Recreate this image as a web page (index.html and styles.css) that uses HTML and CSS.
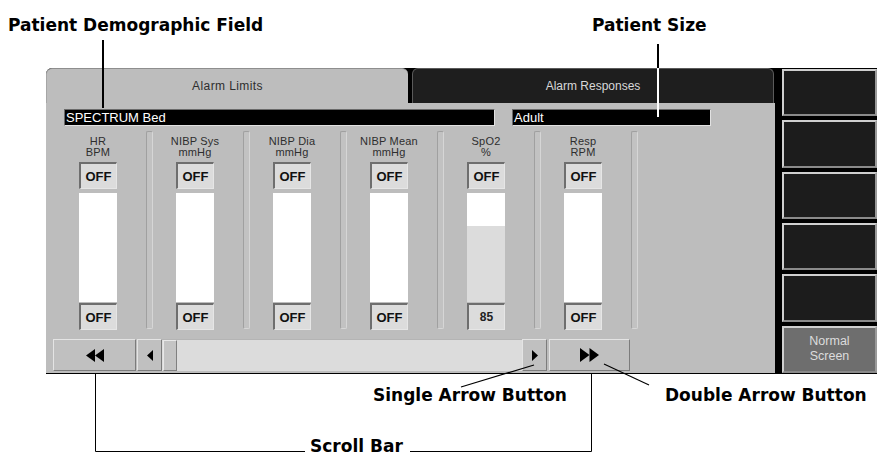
FILE: index.html
```html
<!DOCTYPE html>
<html>
<head>
<meta charset="utf-8">
<link rel="stylesheet" href="styles.css">
</head>
<body>
<div class="page">
  <div class="screen">
    <div class="main">
      <div class="tabs">
        <div class="tab tab-active">Alarm Limits</div>
        <div class="tab tab-dark">Alarm Responses</div>
      </div>
      <div class="panel">
        <div class="fields">
          <div class="field field-name">SPECTRUM Bed</div>
          <div class="field field-size">Adult</div>
        </div>
        <div class="columns">
          <div class="col">
            <div class="label">HR<br>BPM</div>
            <div class="box">OFF</div>
            <div class="bar"></div>
            <div class="box box-low">OFF</div>
          </div>
          <div class="sep"></div>
          <div class="col">
            <div class="label">NIBP Sys<br>mmHg</div>
            <div class="box">OFF</div>
            <div class="bar"></div>
            <div class="box box-low">OFF</div>
          </div>
          <div class="sep"></div>
          <div class="col">
            <div class="label">NIBP Dia<br>mmHg</div>
            <div class="box">OFF</div>
            <div class="bar"></div>
            <div class="box box-low">OFF</div>
          </div>
          <div class="sep"></div>
          <div class="col">
            <div class="label">NIBP Mean<br>mmHg</div>
            <div class="box">OFF</div>
            <div class="bar"></div>
            <div class="box box-low">OFF</div>
          </div>
          <div class="sep"></div>
          <div class="col">
            <div class="label">SpO2<br>%</div>
            <div class="box">OFF</div>
            <div class="bar bar-spo2"><div class="bar-fill" style="height:76px"></div></div>
            <div class="box box-low box-value">85</div>
          </div>
          <div class="sep"></div>
          <div class="col">
            <div class="label">Resp<br>RPM</div>
            <div class="box">OFF</div>
            <div class="bar"></div>
            <div class="box box-low">OFF</div>
          </div>
          <div class="sep"></div>
        </div>
        <div class="scroll">
          <div class="sbtn sbtn-double">
            <svg width="18" height="13" viewBox="0 0 18 13"><polygon points="9,0 0,6.5 9,13"/><polygon points="18,0 9,6.5 18,13"/></svg>
          </div>
          <div class="sbtn sbtn-single sbtn-left">
            <svg width="6" height="11" viewBox="0 0 6 11"><polygon points="6,0 0,5.5 6,11"/></svg>
          </div>
          <div class="track"><div class="thumb"></div></div>
          <div class="sbtn sbtn-single">
            <svg width="6" height="11" viewBox="0 0 6 11"><polygon points="0,0 6,5.5 0,11"/></svg>
          </div>
          <div class="sbtn sbtn-double sbtn-right">
            <svg width="19" height="14" viewBox="0 0 19 14"><polygon points="0,0 9.5,7 0,14"/><polygon points="9.5,0 19,7 9.5,14"/></svg>
          </div>
        </div>
      </div>
    </div>
    <div class="side">
      <div class="key"></div>
      <div class="key"></div>
      <div class="key"></div>
      <div class="key"></div>
      <div class="key"></div>
      <div class="key key-normal">Normal<br>Screen</div>
    </div>
  </div>

  <svg class="leaders" width="877" height="456" viewBox="0 0 877 456">
    <line x1="103" y1="40" x2="103" y2="108" stroke="#000" stroke-width="2"/>
    <line x1="658" y1="44" x2="658" y2="68" stroke="#000" stroke-width="2"/>
    <line x1="658" y1="68" x2="658" y2="117" stroke="#fff" stroke-width="2"/>
    <line x1="534" y1="365" x2="461" y2="387" stroke="#000" stroke-width="1.2"/>
    <line x1="604" y1="364" x2="649" y2="385" stroke="#000" stroke-width="1.2"/>
    <polyline points="95.5,374 95.5,451.5 305,451.5" fill="none" stroke="#000" stroke-width="1"/>
    <polyline points="410,451.5 591.5,451.5 591.5,374" fill="none" stroke="#000" stroke-width="1"/>
  </svg>

  <div class="note note-demo">Patient Demographic Field</div>
  <div class="note note-size">Patient Size</div>
  <div class="note note-single">Single Arrow Button</div>
  <div class="note note-double">Double Arrow Button</div>
  <div class="note note-scroll">Scroll Bar</div>
</div>
</body>
</html>
```

FILE: styles.css
```css
html, body {
  margin: 0;
  padding: 0;
  background: #ffffff;
}

.page {
  position: relative;
  width: 877px;
  height: 456px;
  overflow: hidden;
  padding-top: 68px;
  box-sizing: border-box;
  font-family: "Liberation Sans", Arial, sans-serif;
}

.screen {
  margin-left: 46px;
  width: 831px;
  height: 306px;
  background: #000;
  display: flex;
  border-top-left-radius: 6px;
}

.main {
  width: 729px;
  display: flex;
  flex-direction: column;
  padding-bottom: 1px;
}

.tabs {
  height: 35px;
  display: flex;
  gap: 4px;
}

.tab {
  width: 362px;
  box-sizing: border-box;
  border-radius: 6px 6px 0 0;
  font-size: 12px;
  text-align: center;
  padding-top: 10px;
}

.tab-active {
  background: #bdbdbd;
  color: #2e2e2e;
  letter-spacing: 0.4px;
  border-top: 1px solid #8e8e8e;
  border-left: 1px solid #a6a6a6;
}

.tab-dark {
  background: #1e1e1e;
  color: #d8d8d8;
  border: 1px solid #5a5a5a;
  border-bottom: none;
}

.panel {
  flex: 1;
  background: #bdbdbd;
  padding: 6px 0 2px 0;
  display: flex;
  flex-direction: column;
}

.fields {
  display: flex;
  gap: 17px;
  margin-left: 18px;
  height: 17px;
}

.field {
  box-sizing: border-box;
  background: #000;
  color: #fff;
  font-size: 13px;
  line-height: 15px;
  padding-left: 1px;
  border: 1px solid;
  border-color: #6a6a6a #e2e2e2 #e2e2e2 #6a6a6a;
}

.field-name { width: 431px; }
.field-size { width: 199px; }

.columns {
  display: flex;
  margin-top: 5px;
  padding-left: 10px;
  height: 199px;
}

.col {
  width: 90px;
  padding: 5px 6px 0 0;
  box-sizing: border-box;
  display: flex;
  flex-direction: column;
  align-items: center;
}

.label {
  font-size: 11px;
  line-height: 11px;
  letter-spacing: 0.2px;
  color: #2e2e2e;
  text-align: center;
  white-space: nowrap;
  height: 22px;
}

.box {
  width: 38px;
  height: 27px;
  margin-top: 4px;
  box-sizing: border-box;
  background: #dcdcdc;
  border-top: 2px solid #6e6e6e;
  border-left: 2px solid #6e6e6e;
  border-right: 1px solid #e6e6e6;
  border-bottom: 1px solid #e6e6e6;
  font-size: 13px;
  font-weight: bold;
  color: #111;
  display: flex;
  align-items: center;
  justify-content: center;
}

.box-low { margin-top: 1px; }

.box-value {
  font-size: 12px;
  color: #222;
}

.bar {
  width: 38px;
  height: 109px;
  margin-top: 4px;
  background: #fff;
  display: flex;
  flex-direction: column;
  justify-content: flex-end;
}

.bar-fill {
  background: #dcdcdc;
}

.sep {
  width: 7px;
  height: 198px;
  box-sizing: border-box;
  background: #c2c2c2;
  border: 1px solid;
  border-color: #a0a0a0 #d6d6d6 #d6d6d6 #a0a0a0;
  border-radius: 2px;
}

.scroll {
  display: flex;
  margin-top: 9px;
  margin-left: 7px;
  height: 32px;
}

.sbtn {
  box-sizing: border-box;
  background: #c0c0c0;
  border: 1px solid;
  border-color: #e4e4e4 #7c7c7c #7c7c7c #e4e4e4;
  display: flex;
  align-items: center;
  justify-content: center;
}

.sbtn svg { fill: #000; display: block; }

.sbtn-double { width: 83px; }
.sbtn-single { width: 25px; }
.sbtn-left { margin-left: 1px; }
.sbtn-right { width: 81px; margin-left: 2px; }

.track {
  width: 360px;
  background: #dcdcdc;
  box-sizing: border-box;
  border-top: 1px solid #b4b4b4;
  padding-left: 1px;
  display: flex;
}

.thumb {
  width: 14px;
  box-sizing: border-box;
  background: #c4c4c4;
  border: 1px solid;
  border-color: #e8e8e8 #808080 #808080 #e8e8e8;
}

.side {
  margin-left: 7px;
  width: 95px;
  padding: 1px 0 1px 0;
  box-sizing: border-box;
  display: flex;
  flex-direction: column;
  gap: 4px;
}

.key {
  flex: 1;
  box-sizing: border-box;
  background: #1c1c1c;
  border: 2px solid;
  border-color: #cfcfcf #9a9a9a #8a8a8a #cfcfcf;
}

.key-normal {
  background: #6e6e6e;
  color: #dcdcdc;
  font-size: 12.5px;
  line-height: 15px;
  text-align: center;
  display: flex;
  align-items: center;
  justify-content: center;
}

.leaders {
  position: absolute;
  left: 0;
  top: 0;
  pointer-events: none;
}

.note {
  position: absolute;
  font-family: "DejaVu Sans", sans-serif;
  font-weight: bold;
  font-size: 17px;
  line-height: 20px;
  color: #000;
  white-space: nowrap;
}

.note-demo { left: 8px; top: 15px; }
.note-size { left: 592px; top: 15px; }
.note-single { left: 373px; top: 385px; }
.note-double { left: 665px; top: 385px; }
.note-scroll { left: 310px; top: 436px; }
```
